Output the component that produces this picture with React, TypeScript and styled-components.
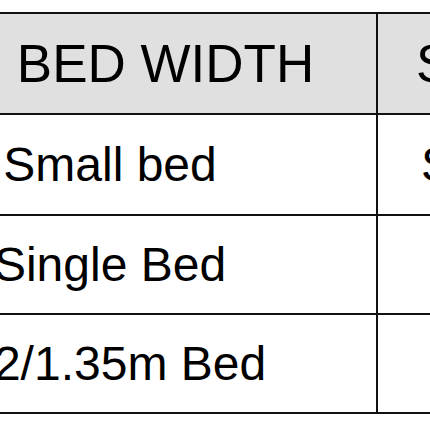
import React from "react";
import styled, { createGlobalStyle } from "styled-components";

const Global = createGlobalStyle`
  html, body { margin: 0; padding: 0; background: #ffffff; overflow: hidden; }
  body { font-family: "Liberation Sans", Arial, sans-serif; }
`;

const Page = styled.div`
  width: 430px;
  height: 430px;
  overflow: hidden;
  background: #ffffff;
  padding-top: 12px;
  box-sizing: border-box;
`;

const Table = styled.div`
  display: grid;
  grid-template-columns: 532px 300px;
  grid-template-rows: 99px 99px 97px 97px;
  gap: 2px;
  padding: 2px;
  background: #111111;
  margin-left: -158px;
  width: max-content;
`;

const Cell = styled.div<{ $head?: boolean; $align?: "center" | "left"; $pad?: number }>`
  background: ${(p) => (p.$head ? "#e0e0e0" : "#ffffff")};
  display: flex;
  align-items: center;
  justify-content: ${(p) => (p.$align === "left" ? "flex-start" : "center")};
  padding-left: ${(p) => p.$pad ?? 0}px;
  box-sizing: border-box;
  font-size: ${(p) => (p.$head ? 53 : 48)}px;
  line-height: 1;
  color: #000000;
  white-space: nowrap;
  overflow: hidden;
`;

const rows = [
  { name: "Small bed", size: "Small" },
  { name: "Single Bed", size: "" },
  { name: "1.2/1.35m Bed", size: "" },
];

export default function App() {
  return (
    <>
      <Global />
      <Page>
        <Table>
          <Cell $head $pad={111}>BED WIDTH</Cell>
          <Cell $head $align="left" $pad={38}>SIZE</Cell>
          {rows.map((r) => (
            <React.Fragment key={r.name}>
              <Cell>{r.name}</Cell>
              <Cell $align="left" $pad={43}>{r.size}</Cell>
            </React.Fragment>
          ))}
        </Table>
      </Page>
    </>
  );
}
